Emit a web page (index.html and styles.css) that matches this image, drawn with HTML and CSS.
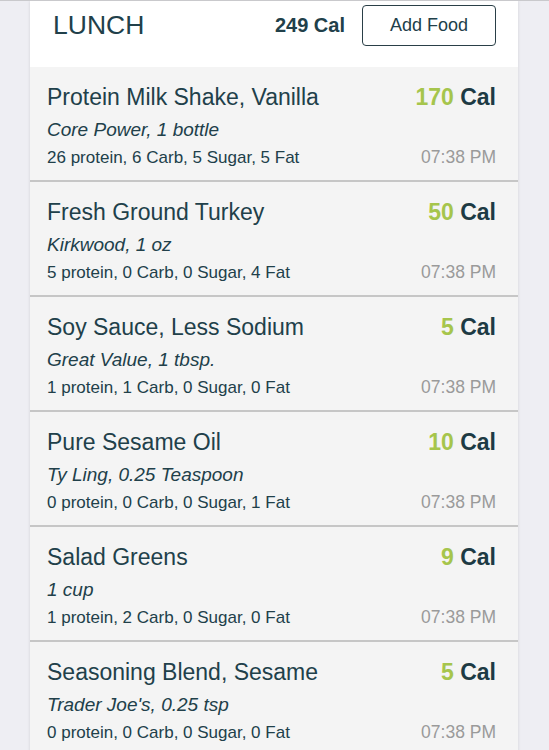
FILE: index.html
```html
<!DOCTYPE html>
<html lang="en">
<head>
    <meta charset="UTF-8">
    <meta name="viewport" content="width=device-width, initial-scale=1.0">
    <title>Lunch</title>
    <link rel="stylesheet" href="styles.css">
</head>
<body>
    <div class="meal-card">
        <header class="meal-header">
            <h1>LUNCH</h1>
            <span class="meal-total">249 Cal</span>
            <button class="add-button">Add Food</button>
        </header>

        <div class="food-list">
            <div class="food-item">
                <div class="food-row">
                    <span class="food-name">Protein Milk Shake, Vanilla</span>
                    <span class="food-cal"><b>170</b> Cal</span>
                </div>
                <div class="food-brand">Core Power, 1 bottle</div>
                <div class="food-row">
                    <span class="food-macros">26 protein, 6 Carb, 5 Sugar, 5 Fat</span>
                    <span class="food-time">07:38 PM</span>
                </div>
            </div>
            <div class="food-item">
                <div class="food-row">
                    <span class="food-name">Fresh Ground Turkey</span>
                    <span class="food-cal"><b>50</b> Cal</span>
                </div>
                <div class="food-brand">Kirkwood, 1 oz</div>
                <div class="food-row">
                    <span class="food-macros">5 protein, 0 Carb, 0 Sugar, 4 Fat</span>
                    <span class="food-time">07:38 PM</span>
                </div>
            </div>
            <div class="food-item">
                <div class="food-row">
                    <span class="food-name">Soy Sauce, Less Sodium</span>
                    <span class="food-cal"><b>5</b> Cal</span>
                </div>
                <div class="food-brand">Great Value, 1 tbsp.</div>
                <div class="food-row">
                    <span class="food-macros">1 protein, 1 Carb, 0 Sugar, 0 Fat</span>
                    <span class="food-time">07:38 PM</span>
                </div>
            </div>
            <div class="food-item">
                <div class="food-row">
                    <span class="food-name">Pure Sesame Oil</span>
                    <span class="food-cal"><b>10</b> Cal</span>
                </div>
                <div class="food-brand">Ty Ling, 0.25 Teaspoon</div>
                <div class="food-row">
                    <span class="food-macros">0 protein, 0 Carb, 0 Sugar, 1 Fat</span>
                    <span class="food-time">07:38 PM</span>
                </div>
            </div>
            <div class="food-item">
                <div class="food-row">
                    <span class="food-name">Salad Greens</span>
                    <span class="food-cal"><b>9</b> Cal</span>
                </div>
                <div class="food-brand">1 cup</div>
                <div class="food-row">
                    <span class="food-macros">1 protein, 2 Carb, 0 Sugar, 0 Fat</span>
                    <span class="food-time">07:38 PM</span>
                </div>
            </div>
            <div class="food-item">
                <div class="food-row">
                    <span class="food-name">Seasoning Blend, Sesame</span>
                    <span class="food-cal"><b>5</b> Cal</span>
                </div>
                <div class="food-brand">Trader Joe's, 0.25 tsp</div>
                <div class="food-row">
                    <span class="food-macros">0 protein, 0 Carb, 0 Sugar, 0 Fat</span>
                    <span class="food-time">07:38 PM</span>
                </div>
            </div>
        </div>
    </div>
</body>
</html>
```

FILE: styles.css
```css
body {
    font-family: 'Liberation Sans', Arial, sans-serif;
    margin: 0;
    padding: 0;
    background-color: #eeeef3;
    color: #21404a;
    border-top: 1px solid #c9c9cc;
    height: 749px;
    overflow: hidden;
}

.meal-card {
    margin: 0 31px 0 30px;
    background-color: #f4f4f4;
    box-shadow: 0 0 3px rgba(0, 0, 0, 0.12);
}

.meal-header {
    display: flex;
    align-items: center;
    height: 66px;
    padding: 0 22px 17px 23px;
    background-color: #fff;
    box-sizing: border-box;
}

.meal-header h1 {
    margin: 0;
    flex: 1;
    font-size: 26.5px;
    font-weight: 400;
    color: #21404a;
}

.meal-total {
    font-size: 20px;
    font-weight: 700;
    margin-right: 17px;
}

.add-button {
    width: 134px;
    height: 41px;
    background-color: #fff;
    border: 1.5px solid #2a3f47;
    border-radius: 4px;
    font-family: 'Liberation Sans', Arial, sans-serif;
    font-size: 18px;
    color: #21404a;
}

.food-item {
    height: 115px;
    padding: 16px 22px 0 17px;
    box-sizing: border-box;
    border-bottom: 2px solid #c6c6c6;
}

.food-row {
    display: flex;
    justify-content: space-between;
    align-items: baseline;
}

.food-name {
    font-size: 23px;
    line-height: 28px;
}

.food-cal {
    font-size: 23px;
    font-weight: 700;
    color: #1d3a44;
}

.food-cal b {
    color: #a6c54c;
}

.food-brand {
    font-size: 19px;
    font-style: italic;
    line-height: 28px;
    margin-top: 5px;
}

.food-macros {
    font-size: 17px;
    line-height: 28px;
}

.food-time {
    font-size: 17.5px;
    color: #9a9a9a;
}
```
